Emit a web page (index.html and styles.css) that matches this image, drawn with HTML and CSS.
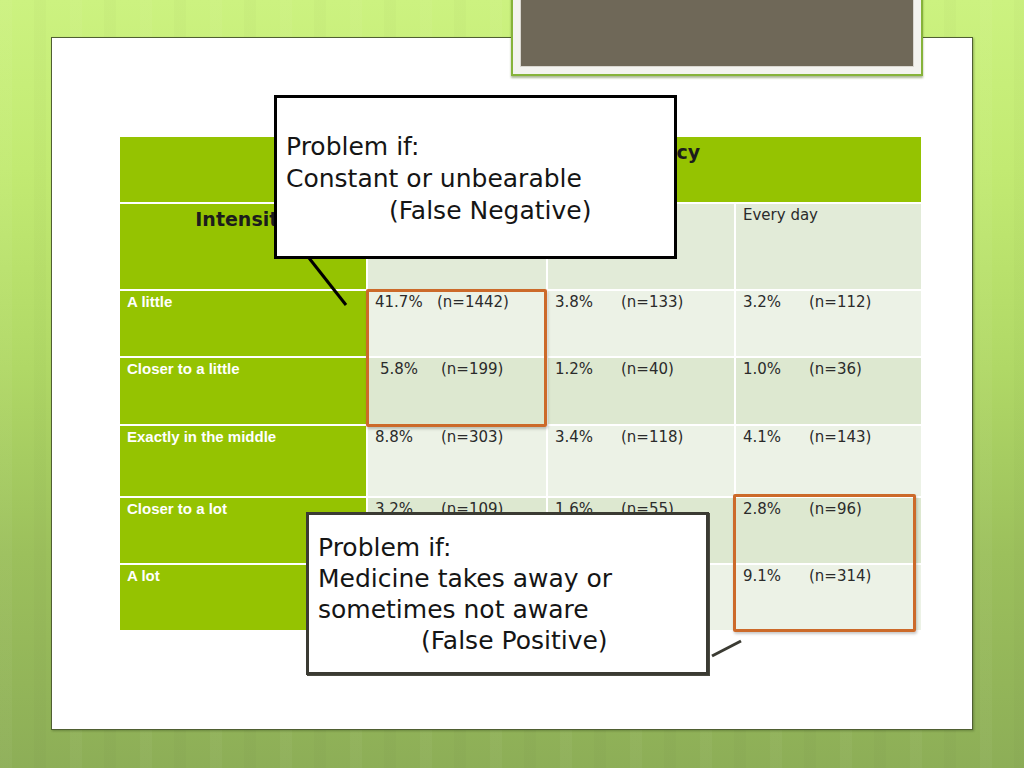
FILE: index.html
```html
<!DOCTYPE html>
<html lang="en">
<head>
<meta charset="utf-8">
<title>Intensity vs Frequency</title>
<link rel="stylesheet" href="styles.css">
</head>
<body>
<div class="slide">
  <div class="panel">
    <div class="grid">
      <div class="cell green"></div>
      <div class="cell green head span3">Frequency</div>

      <div class="cell green head center">Intensity</div>
      <div class="cell hdr"></div>
      <div class="cell hdr"></div>
      <div class="cell hdr">Every day</div>

      <div class="cell green label">A little</div>
      <div class="cell light"><span class="pct narrow">41.7%</span>(n=1442)</div>
      <div class="cell light"><span class="pct">3.8%</span>(n=133)</div>
      <div class="cell light"><span class="pct">3.2%</span>(n=112)</div>

      <div class="cell green label">Closer to a little</div>
      <div class="cell dark"><span class="pct inset">5.8%</span>(n=199)</div>
      <div class="cell dark"><span class="pct">1.2%</span>(n=40)</div>
      <div class="cell dark"><span class="pct">1.0%</span>(n=36)</div>

      <div class="cell green label">Exactly in the middle</div>
      <div class="cell light"><span class="pct">8.8%</span>(n=303)</div>
      <div class="cell light"><span class="pct">3.4%</span>(n=118)</div>
      <div class="cell light"><span class="pct">4.1%</span>(n=143)</div>

      <div class="cell green label">Closer to a lot</div>
      <div class="cell dark"><span class="pct">3.2%</span>(n=109)</div>
      <div class="cell dark"><span class="pct">1.6%</span>(n=55)</div>
      <div class="cell dark"><span class="pct">2.8%</span>(n=96)</div>

      <div class="cell green label">A lot</div>
      <div class="cell light"></div>
      <div class="cell light"></div>
      <div class="cell light"><span class="pct">9.1%</span>(n=314)</div>
    </div>
  </div>

  <div class="frame"><div class="frame-inner"></div></div>

  <div class="mark mark-1"></div>
  <div class="mark mark-2"></div>

  <svg class="pointers" width="1024" height="768" viewBox="0 0 1024 768">
    <line x1="309" y1="258" x2="346" y2="305" stroke="#000" stroke-width="3"/>
    <line x1="712" y1="656" x2="741" y2="641" stroke="#3b3b33" stroke-width="3"/>
  </svg>

  <div class="callout callout-1">
    <div>Problem if:</div>
    <div>Constant or unbearable</div>
    <div class="indent">(False Negative)</div>
  </div>

  <div class="callout callout-2">
    <div>Problem if:</div>
    <div>Medicine takes away or</div>
    <div>sometimes not aware</div>
    <div class="indent">(False Positive)</div>
  </div>
</div>
</body>
</html>
```
FILE: styles.css
```css
* { box-sizing: border-box; }

html, body {
  margin: 0;
  padding: 0;
}

body {
  font-family: "DejaVu Sans", sans-serif;
}

.slide {
  position: relative;
  width: 1024px;
  height: 768px;
  overflow: hidden;
  padding: 37px 0 0 51px;
  background:
    repeating-linear-gradient(90deg, rgba(255,255,255,0.035) 0 12px, rgba(255,255,255,0) 12px 34px, rgba(0,0,0,0.015) 34px 46px, rgba(255,255,255,0) 46px 70px),
    linear-gradient(180deg, #ccf280 0%, #c2ea72 22%, #b0d866 48%, #9cc05c 72%, #8dae57 100%);
}

.panel {
  width: 922px;
  height: 693px;
  background: #ffffff;
  border: 1px solid #4f5f32;
  box-shadow: 1px 1px 2px rgba(40, 60, 20, 0.35);
  padding: 99px 0 0 68px;
}

.grid {
  display: grid;
  grid-template-columns: 246px 178px 186px 185px;
  grid-template-rows: 65px 85px 65px 66px 70px 65px 65px;
  column-gap: 2px;
  row-gap: 2px;
  width: 801px;
}

.cell {
  padding: 2px 7px 0 7px;
  font-size: 15px;
  line-height: 18px;
  color: #2b2b2b;
}

.green { background: #95c301; }
.light { background: #ecf2e6; }
.dark { background: #dde8d0; }
.hdr { background: #e2ebd8; }

.span3 {
  grid-column: 2 / span 3;
}

.head {
  font-weight: bold;
  font-size: 19px;
  line-height: 22px;
  color: #1c1c1c;
  text-align: center;
  padding-top: 4px;
}

.label {
  font-family: "Liberation Sans", Arial, sans-serif;
  font-weight: bold;
  color: #ffffff;
  font-size: 15px;
}

.pct {
  display: inline-block;
  width: 66px;
}

.pct.narrow { width: 62px; }
.pct.inset { padding-left: 5px; }

.frame {
  position: absolute;
  left: 511px;
  top: -12px;
  width: 412px;
  height: 88px;
  border: 2px solid #86b33a;
  background: #f3f3ef;
  padding: 7px;
  box-shadow: 0 2px 2px rgba(70, 100, 20, 0.45);
}

.frame-inner {
  width: 100%;
  height: 100%;
  background: #6f6858;
  border: 1px solid #d8d6cf;
}

.mark {
  position: absolute;
  border: 3px solid #cc6a2a;
  border-radius: 2px;
  box-shadow: 1px 2px 3px rgba(0, 0, 0, 0.22);
}

.mark-1 {
  left: 366px;
  top: 289px;
  width: 181px;
  height: 138px;
}

.mark-2 {
  left: 733px;
  top: 494px;
  width: 183px;
  height: 138px;
}

.pointers {
  position: absolute;
  left: 0;
  top: 0;
  pointer-events: none;
}

.callout {
  position: absolute;
  width: 403px;
  background: #ffffff;
  font-family: "DejaVu Sans", sans-serif;
  font-size: 25px;
  color: #151515;
  padding-left: 9px;
  white-space: nowrap;
}

.callout-1 {
  left: 274px;
  top: 95px;
  height: 164px;
  border: 3px solid #000000;
  line-height: 32px;
  padding-top: 33px;
}

.callout-2 {
  left: 306px;
  top: 512px;
  height: 163px;
  border: 3px solid #3b3b33;
  box-shadow: 1px 1px 0 #4a4a40;
  line-height: 31px;
  padding-top: 17px;
}

.indent {
  padding-left: 103px;
}
```
